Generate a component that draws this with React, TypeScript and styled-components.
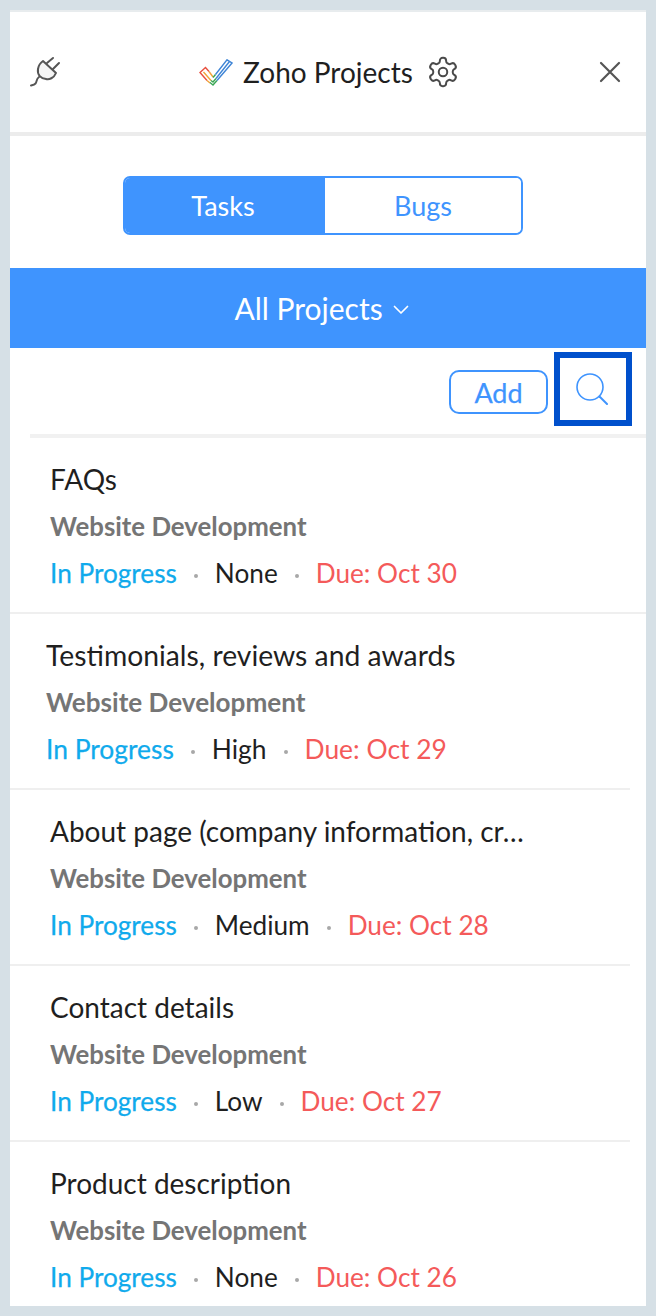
import React from "react";
import styled, { createGlobalStyle } from "styled-components";

const Global = createGlobalStyle`
  html, body { margin: 0; padding: 0; background: #d6e0e6; }
  body { font-family: Lato, "Open Sans", sans-serif; }
`;
const Page = styled.div`
  width: 656px; height: 1316px; box-sizing: border-box; padding: 10px 10px 10px; overflow: hidden;
`;
const Panel = styled.div`
  height: 1296px; background: #fff; border-top: 2px solid #e8ecee; box-sizing: border-box; overflow: hidden;
`;
const Header = styled.header`
  height: 124px; box-sizing: border-box; border-bottom: 4px solid #ececec; display: flex; align-items: center;
  justify-content: space-between; padding: 0 24px 0 19px;
`;
const Brand = styled.div`
  display: flex; align-items: center; font-size: 28px; color: #1f1f1f; margin-left: 0;
`;
const BrandName = styled.span` margin: 0 13px 0 10px; line-height: 36px; `;
const Tabs = styled.div`
  width: 400px; height: 59px; margin: 40px 0 33px 113px; display: flex; box-sizing: border-box;
  border: 2px solid #3f94fe; border-radius: 7px; overflow: hidden;
`;
const Tab = styled.div<{ $active?: boolean }>`
  flex: ${p => (p.$active ? "0 0 200px" : "1")}; display: flex; align-items: center; justify-content: center; font-size: 27px;
  padding-right: ${p => (p.$active ? 4 : 0)}px; box-sizing: border-box;
  background: ${p => (p.$active ? "#3f94fe" : "#fff")}; color: ${p => (p.$active ? "#fff" : "#3f94fe")};
`;
const Bar = styled.div`
  height: 80px; background: #3f94fe; color: #fff; font-size: 30px; display: flex; align-items: center;
  justify-content: center; gap: 10px; padding-right: 13px; box-sizing: border-box;
`;
const Actions = styled.div`
  height: 90px; margin-left: 20px; border-bottom: 4px solid #f1f1f1; box-sizing: border-box;
  display: flex; justify-content: flex-end; align-items: flex-start; padding: 4px 14px 0 0; gap: 6px;
`;
const AddButton = styled.button`
  width: 99px; height: 44px; margin-top: 18px; border: 2px solid #3f94fe; border-radius: 10px; background: #fff;
  color: #3f94fe; font: 27px Lato, sans-serif; padding: 0; -webkit-text-stroke: 0.25px #3f94fe;
`;
const SearchBox = styled.div`
  width: 78px; height: 74px; box-sizing: border-box; border: 6px solid #0050cc; display: flex; align-items: center; justify-content: center;
  padding-right: 3px;
`;
const Item = styled.div<{ $bleed?: boolean; $shift?: boolean }>`
  height: 176px; box-sizing: border-box; margin-right: ${p => (p.$bleed ? 0 : 16)}px;
  padding: 23px 0 0 ${p => (p.$shift ? 36 : 40)}px; border-bottom: 2px solid #efefef;
`;
const Title = styled.div<{ $shift?: boolean }>`
  font-size: ${p => (p.$shift ? 28.3 : 28)}px; line-height: 36px; color: #1f1f1f; white-space: nowrap;
`;
const Sub = styled.div<{ $shift?: boolean }>`
  font-size: ${p => (p.$shift ? 26.1 : 25.8)}px; line-height: 36px; margin-top: 11px; font-weight: 700; color: #757575;
`;
const Meta = styled.div<{ $shift?: boolean }>`
  display: flex; align-items: center; font-size: ${p => (p.$shift ? 26.4 : 26.2)}px; line-height: 36px; margin-top: 11px;
`;
const Status = styled.span` color: #10aaec; -webkit-text-stroke: 0.25px #10aaec; `;
const Priority = styled.span` color: #1f1f1f; `;
const Due = styled.span` color: #f45a5a; `;
const Dot = styled.span`
  width: 4px; height: 4px; border-radius: 50%; background: #a8a8a8; margin: 6px 17px 0; flex: none;
`;

const Plug = () => (
  <svg width="32" height="32" viewBox="0 0 32 32" fill="none" stroke="#555" strokeWidth="2" strokeLinecap="round" strokeLinejoin="round">
    <path d="M14 5 L27 17 C25 22 20 24 17 23 C12 22.5 8 19 9 13 C9.5 10 11 7 14 5Z" fill="#f4f4f4" />
    <path d="M18 7 L24 2 M24 13 L30 7 M10 21 C7 23 8 26 6.5 27.5 C5 29 4 29 2 29.5" />
  </svg>
);
const Logo = () => (
  <svg width="34" height="27" viewBox="0 0 34 27" fill="none" strokeWidth="1.4" strokeLinejoin="miter">
    <path d="M8 21.5 L1 13.5 L6.5 8.5 L10 12.5" stroke="#e8503f" />
    <path d="M10 12.5 L14 18 M8 21.5 L11 24 M4.5 13 L12 21.5" stroke="#f2a33a" />
    <path d="M11 23.5 L14 26 L18 21.5 M12 21.5 L14 23 L17 19.5 M14 18.5 L16.5 15.5" stroke="#3aa655" />
    <path d="M18 21.5 L33 4 L28 0.8 L16.5 15.5 M17 19.5 L30.5 2.5" stroke="#3f85d6" />
  </svg>
);
const Gear = () => (
  <svg width="34" height="34" viewBox="0 0 24 24" fill="none" stroke="#4a4a4a" strokeWidth="1.4" strokeLinecap="round" strokeLinejoin="round">
    <path d="M12.22 2h-.44a2 2 0 0 0-2 2v.18a2 2 0 0 1-1 1.73l-.43.25a2 2 0 0 1-2 0l-.15-.08a2 2 0 0 0-2.73.73l-.22.38a2 2 0 0 0 .73 2.73l.15.1a2 2 0 0 1 1 1.72v.51a2 2 0 0 1-1 1.74l-.15.09a2 2 0 0 0-.73 2.73l.22.38a2 2 0 0 0 2.73.73l.15-.08a2 2 0 0 1 2 0l.43.25a2 2 0 0 1 1 1.73V20a2 2 0 0 0 2 2h.44a2 2 0 0 0 2-2v-.18a2 2 0 0 1 1-1.73l.43-.25a2 2 0 0 1 2 0l.15.08a2 2 0 0 0 2.73-.73l.22-.39a2 2 0 0 0-.73-2.73l-.15-.08a2 2 0 0 1-1-1.74v-.5a2 2 0 0 1 1-1.74l.15-.09a2 2 0 0 0 .73-2.73l-.22-.38a2 2 0 0 0-2.73-.73l-.15.08a2 2 0 0 1-2 0l-.43-.25a2 2 0 0 1-1-1.73V4a2 2 0 0 0-2-2z" />
    <circle cx="12" cy="12" r="3" />
  </svg>
);
const Close = () => (
  <svg width="24" height="24" viewBox="0 0 24 24" stroke="#555" strokeWidth="2.2" strokeLinecap="round">
    <path d="M3 3 L21 21 M21 3 L3 21" />
  </svg>
);
const Chevron = () => (
  <svg width="16" height="10" viewBox="0 0 16 10" fill="none" stroke="#fff" strokeWidth="1.7" strokeLinecap="round" strokeLinejoin="round" style={{ marginTop: 4 }}>
    <path d="M1.5 1.5 L8 8 L14.5 1.5" />
  </svg>
);
const Search = () => (
  <svg width="32" height="32" viewBox="0 0 32 32" fill="none" stroke="#3f94fe" strokeWidth="1.6" strokeLinecap="round">
    <circle cx="14" cy="14" r="13" />
    <path d="M23.5 23.5 L31 31" strokeWidth="2" />
  </svg>
);

const tasks = [
  { title: "FAQs", priority: "None", due: "Oct 30", bleed: true },
  { title: "Testimonials, reviews and awards", priority: "High", due: "Oct 29", shift: true },
  { title: "About page (company information, cr…", priority: "Medium", due: "Oct 28" },
  { title: "Contact details", priority: "Low", due: "Oct 27" },
  { title: "Product description", priority: "None", due: "Oct 26" },
];

export default function App() {
  return (
    <Page>
      <Global />
      <Panel>
        <Header>
          <Plug />
          <Brand>
            <Logo />
            <BrandName>Zoho Projects</BrandName>
            <Gear />
          </Brand>
          <Close />
        </Header>
        <Tabs>
          <Tab $active>Tasks</Tab>
          <Tab>Bugs</Tab>
        </Tabs>
        <Bar>All Projects <Chevron /></Bar>
        <Actions>
          <AddButton>Add</AddButton>
          <SearchBox><Search /></SearchBox>
        </Actions>
        {tasks.map(t => (
          <Item key={t.title} $bleed={t.bleed} $shift={t.shift}>
            <Title $shift={t.shift}>{t.title}</Title>
            <Sub $shift={t.shift}>Website Development</Sub>
            <Meta $shift={t.shift}>
              <Status>In Progress</Status>
              <Dot />
              <Priority>{t.priority}</Priority>
              <Dot />
              <Due>Due: {t.due}</Due>
            </Meta>
          </Item>
        ))}
      </Panel>
    </Page>
  );
}
